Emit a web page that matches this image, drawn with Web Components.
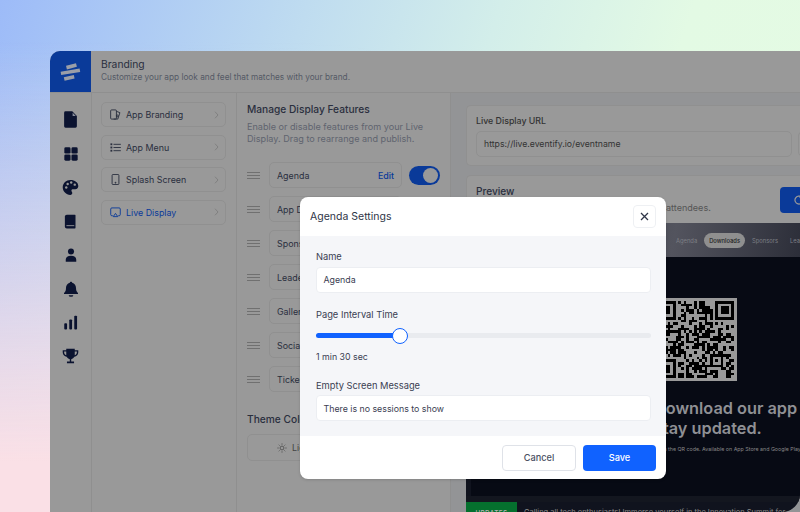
<!DOCTYPE html>
<html><head><meta charset="utf-8"><style>
html,body{margin:0;height:100%}
body{width:800px;height:512px;overflow:hidden;box-sizing:border-box;padding:51px 0 0 50px;
background:linear-gradient(108deg,#9dbbf8 0%,#bfdcf0 32%,#d3eeea 52%,#e3fae4 72%,#e5fbe3 100%);font-family:"Inter","Noto Sans",sans-serif;position:relative}
.bgl{position:absolute;inset:0;background:linear-gradient(to bottom,rgba(250,222,228,0) 8%,rgba(250,224,230,1) 90%);-webkit-mask:linear-gradient(to right,#000 0,#000 60px,transparent 400px);mask:linear-gradient(to right,#000 0,#000 60px,transparent 400px)}
app-window{position:relative}
</style></head><body><div class="bgl"></div>
<app-window>
 <agenda-modal slot="modal"></agenda-modal>
</app-window>
<script>
const I={
doc:'<path d="M5 .5h9.500L21 7v14.500a2 2 0 0 1-2 2H5a2 2 0 0 1-2-2v-19a2 2 0 0 1 2-2z"/><path d="M15 2.500 19.500 7H15z" fill="#8a8f9c"/>',
grid:'<rect x="2" y="2" width="9.300" height="9.300" rx="2"/><rect x="12.700" y="2" width="9.300" height="9.300" rx="2"/><rect x="2" y="12.700" width="9.300" height="9.300" rx="2"/><rect x="12.700" y="12.700" width="9.300" height="9.300" rx="2"/>',
palette:'<path d="M12 1.500C5.900 1.500 1 6 1 11.800c0 5.800 4.900 10.700 10.600 10.700 2 0 2.900-1.200 2.900-2.600 0-1.800-1.200-2.100-1.200-3.500 0-1.200 1-1.900 2.200-1.900h3.200c2.800 0 4.300-1.900 4.300-4.500C23 5 18 1.500 12 1.500z"/><g fill="#999"><circle cx="6" cy="12" r="1.700"/><circle cx="8" cy="7" r="1.700"/><circle cx="13" cy="5" r="1.700"/><circle cx="18" cy="8" r="1.700"/></g>',
book:'<path d="M6 1h13a1 1 0 0 1 1 1v20a1 1 0 0 1-1 1H6a3 3 0 0 1-3-3V4a3 3 0 0 1 3-3z"/><rect x="5.500" y="18" width="12.500" height="1.400" fill="#999"/>',
user:'<circle cx="12" cy="6" r="5.200"/><path d="M3 23.500v-3.500C3 16 6.500 13.500 12 13.500s9 2.500 9 6.500v3.500z"/>',
bell:'<path d="M12 1c1 0 1.800.8 1.800 1.700 3.700.9 5.700 4 5.700 7.800 0 4.500 1.500 6.300 3 7.500v1.500h-21V18c1.500-1.200 3-3 3-7.500 0-3.800 2-6.900 5.700-7.800C10.200 1.800 11 1 12 1z"/><path d="M8.500 21.300h7a3.500 2.500 0 0 1-7 0z"/>',
bars:'<rect x="2" y="13" width="4.500" height="10" rx="1.500"/><rect x="10" y="7" width="4.500" height="16" rx="1.500"/><rect x="18" y="1" width="4.500" height="22" rx="1.500"/>',
trophy:'<path d="M6 1h12v2h5v3c0 3.500-2.500 6-5.500 6.500-1 1.800-2.500 3-4.500 3.300V19h4v2.500H7V19h4v-3.200c-2-.3-3.500-1.500-4.500-3.300C3.500 12 1 9.500 1 6V3h5zM3 5v1c0 2 1 3.500 3 4.200V5zm18 0h-3v5.200c2-.7 3-2.200 3-4.200z"/>'
};
function svg(n,s){return `<svg viewBox="0 0 24 24" width="${s}" height="${s}" fill="currentColor">${I[n]}</svg>`}
class Base extends HTMLElement{
 constructor(){super();this.attachShadow({mode:'open'});this.shadowRoot.innerHTML=this.html()}
}
class NavRail extends Base{html(){const sizes={doc:17,grid:16,palette:17,book:15,user:14,bell:16,bars:15,trophy:17};
 return `<style>:host{display:flex;flex-direction:column;align-items:center;width:41px;flex:none;border-right:1px solid #8f8f8f;color:#0b1330;padding-top:10px;box-sizing:content-box}
 .i{height:33.800px;display:flex;align-items:center;justify-content:center}svg{display:block}</style>`+
 Object.keys(sizes).map(k=>`<div class="i">${svg(k,sizes[k])}</div>`).join('')}}
customElements.define('nav-rail',NavRail);
class MenuItem extends Base{html(){return `<style>:host{display:flex;align-items:center;height:25px;box-sizing:border-box;border:1px solid #909090;border-radius:5px;padding:0 6px 0 8px;gap:5px;font-size:8.900px;color:#2a2f3e}
 :host([active]){color:#0a3a99}
 .ic{width:11px;height:11px;display:flex}.t{flex:1}svg{display:block}
 .c{width:5px;height:8px;color:#808080}</style>
 <span class="ic"><slot name="icon"></slot></span><span class="t"><slot></slot></span><svg class="c" viewBox="0 0 5 8" fill="none" stroke="currentColor" stroke-width="1"><path d="M1 .7 4 4 1 7.300"/></svg>`}}
customElements.define('menu-item',MenuItem);
class FeatureRow extends Base{html(){return `<style>:host{display:flex;align-items:center;height:26px;gap:9px}
 .d{width:13px;height:7px;flex:none;border-top:1px solid #707070;border-bottom:1px solid #707070;position:relative;box-sizing:border-box}
 .d::after{content:"";position:absolute;left:0;right:0;top:2px;height:1px;background:#707070}
 .f{width:133px;height:26px;box-sizing:border-box;border:1px solid #909090;border-radius:5px;padding:0 7px;display:flex;align-items:center;justify-content:space-between;font-size:8.900px;color:#2a2f3e;flex:none}
 ::slotted([slot=edit]){color:#0a3a99;font-weight:500}
 </style><span class="d"></span><span class="f"><span><slot></slot></span><slot name="edit"></slot></span><slot name="toggle"></slot>`}}
customElements.define('feature-row',FeatureRow);
class ToggleSwitch extends Base{html(){return `<style>:host{display:block;width:31px;height:19px;border-radius:10px;background:#0a3a99;position:relative;flex:none;margin-left:-2px}
 i{position:absolute;right:2px;top:2px;width:15px;height:15px;border-radius:50%;background:#999}</style><i></i>`}}
customElements.define('toggle-switch',ToggleSwitch);
class QrCode extends Base{html(){
 const n=29,cells=[];let seed=11;const r=()=>(seed=(seed*73+41)%1009)/1009;
 const fin=(x,y)=>{const a=[];for(let j=0;j<7;j++)for(let i=0;i<7;i++){if(i==0||j==0||i==6||j==6||(i>1&&i<5&&j>1&&j<5))a.push([x+i,y+j])}return a};
 const res=(x,y,X,Y)=>x>=X-1&&x<=X+7&&y>=Y-1&&y<=Y+7;
 const al=(x,y)=>x>=20&&x<=24&&y>=20&&y<=24;
 for(let y=0;y<n;y++)for(let x=0;x<n;x++){if(res(x,y,0,0)||res(x,y,22,0)||res(x,y,0,22)||al(x,y))continue;if(r()>.47)cells.push([x,y])}
 cells.push(...fin(0,0),...fin(22,0),...fin(0,22));
 for(let j=0;j<5;j++)for(let i=0;i<5;i++)if(i==0||j==0||i==4||j==4||(i==2&&j==2))cells.push([20+i,20+j]);
 return `<style>:host{display:block;width:83px;height:83px;background:#999;box-sizing:border-box;padding:3px;flex:none}svg{display:block;width:77px;height:77px}</style>
 <svg viewBox="0 0 ${n} ${n}" shape-rendering="crispEdges" fill="#000">${cells.map(c=>`<rect x="${c[0]}" y="${c[1]}" width="1" height="1"/>`).join('')}</svg>`}}
customElements.define('qr-code',QrCode);
class LivePreview extends Base{html(){return `<style>
 :host{display:flex;flex-direction:column;background:#10131e;height:289px;width:334px;border-radius:0 0 18px 0;overflow:hidden;color:#999;flex:none}
 .nav{height:34px;flex:none;width:334px;background:linear-gradient(100deg,#23262f,#53545e 62%,#2c2e39);display:flex;align-items:center;justify-content:flex-start;gap:7px;font-size:5.800px;color:#7d7f85;padding-left:210px;white-space:nowrap;box-sizing:border-box;overflow:hidden}
 .nav span{flex:none}.nav .on{background:#8f8f8f;color:#222;border-radius:8px;padding:4px 5px;font-weight:500;}
 .nav .l{margin-left:5px}
 .panel{flex:none;height:239px;margin:0 0 0 5px;background:#070a14;display:flex;flex-direction:column;align-items:flex-start;padding:41px 0 0 183px;box-sizing:border-box}
 h3{margin:17px 0 0;font-size:16.300px;line-height:20px;font-weight:600;color:#8f9094;white-space:nowrap}
 p{margin:7px 0 0;font-size:5.300px;line-height:8px;color:#888;white-space:nowrap}
 .strip{height:6px;flex:none;background:#13161f}
 .tk{height:10px;flex:none;display:flex;align-items:flex-start;gap:7px;font-size:7.500px;color:#8a8a8a;white-space:nowrap}
 .tk b{width:51px;height:10px;background:#05702e;font-weight:500;font-size:6.400px;text-align:center;padding-top:7px;box-sizing:border-box;color:#b5b5b5;flex:none;letter-spacing:.4px}
 .tk span{padding-top:6px}
 </style>
 <div class="nav"><span>Agenda</span><span class="on">Downloads</span><span>Sponsors</span><span class="l">Leaderboard</span></div>
 <div class="panel"><qr-code></qr-code><h3>Download our app<br>stay updated.</h3><p>Scan the QR code. Available on App Store and Google Play</p></div>
 <div class="strip"></div>
 <div class="tk"><b>UPDATES</b><span>Calling all tech enthusiasts! Immerse yourself in the Innovation Summit for</span></div>`}}
customElements.define('live-preview',LivePreview);
class AgendaModal extends Base{html(){return `<style>
 :host{display:flex;flex-direction:column;position:absolute;left:250px;top:146px;width:366px;height:282px;background:#fff;border-radius:8px;overflow:hidden;color:#2f3547;box-shadow:0 1px 3px rgba(0,0,0,.15)}
 .h{height:39px;flex:none;display:flex;align-items:center;justify-content:space-between;padding:0 10px 1px;box-sizing:border-box;font-size:10.500px;font-weight:400}
 .x{width:23px;height:23px;box-sizing:border-box;border:1px solid #eef0f3;border-radius:4px;display:flex;align-items:center;justify-content:center;color:#2f3547;margin-top:1px}
 .b{flex:1;background:#f5f6f9;padding:15px 15px 0 16px;display:flex;flex-direction:column}
 label{font-size:9.300px;height:12px;line-height:12px;display:block;color:#3a4052}
 .in{height:26px;box-sizing:border-box;margin-top:3.500px;background:#fff;border:1px solid #eceef2;border-radius:4px;display:flex;align-items:center;padding:0 6.500px;font-size:8.800px;color:#3a4052}
 .sl{height:5px;background:#e9ebef;border-radius:3px;margin-top:12px;position:relative}
 .sl i{position:absolute;left:0;top:0;bottom:0;width:84px;background:#1062ff;border-radius:3px}
 .sl u{position:absolute;left:76px;top:-5.500px;width:16px;height:16px;box-sizing:border-box;border-radius:50%;background:#fff;border:1.500px solid #1062ff}
 .v{font-size:8.800px;margin-top:13px;height:12px;line-height:12px;color:#3a4052}
 .f{height:43px;flex:none;display:flex;justify-content:flex-end;align-items:center;gap:7px;padding:0 10px 0 0;box-sizing:border-box;font-size:9.200px}
 .f span{width:74px;height:26px;box-sizing:border-box;border-radius:4px;display:flex;align-items:center;justify-content:center;font-weight:500}
 .c{border:1px solid #dfe2e8;color:#4a5063}.s{background:#1062ff;color:#fff;width:73px!important}
 </style>
 <div class="h"><span>Agenda Settings</span><span class="x"><svg width="9" height="9" viewBox="0 0 9 9" stroke="currentColor" stroke-width="1.300" fill="none"><path d="M1 1l7 7M8 1 1 8"/></svg></span></div>
 <div class="b">
  <label>Name</label><div class="in">Agenda</div>
  <label style="margin-top:16.500px">Page Interval Time</label><div class="sl"><i></i><u></u></div>
  <div class="v">1 min 30 sec</div>
  <label style="margin-top:17px">Empty Screen Message</label><div class="in" style="margin-top:3px">There is no sessions to show</div>
 </div>
 <div class="f"><span class="c">Cancel</span><span class="s">Save</span></div>`}}
customElements.define('agenda-modal',AgendaModal);
class AppWindow extends Base{html(){return `<style>
 :host{display:block;width:750px;height:461px;background:#999;border-radius:10px 0 0 0;overflow:hidden;color:#2a2f3e;position:relative}
 .top{height:41px;display:flex;border-bottom:1px solid #8f8f8f;box-sizing:content-box}
 .logo{width:41px;height:41px;background:#0a3a99;display:flex;align-items:center;justify-content:center;flex:none;color:#9a9ea8}
 .ti{padding:7px 0 0 10px;font-size:10.300px;line-height:13px}.ti small{display:block;font-size:8.250px;line-height:13px;color:#555a66}
 .main{display:flex;height:419px}
 .c2{border-right:1px solid #8f8f8f;padding:9px 10px 0 9px;box-sizing:border-box;display:flex;flex-direction:column;gap:7.500px;flex:none;width:145px}
 .c3{width:214px;flex:none;padding:10px 0 0 10px;box-sizing:border-box;border-right:1px solid #8f8f8f}
 h2{margin:0;font-size:10.200px;font-weight:500;line-height:13px}
 .d{margin:5px 0 0;font-size:9.100px;line-height:12.200px;color:#60646f}
 .rows{display:flex;flex-direction:column;gap:8px;margin-top:17px}
 .th{margin-top:21px}
 .lt{margin-top:8px;height:27px;width:200px;border:1px solid #909090;border-radius:5px;box-sizing:border-box;display:flex;align-items:center;gap:5px;padding-left:29px;font-size:8.900px;color:#444}
 .c4{flex:1;background:#939496;padding:12px 0 0 15px;min-width:0;overflow:hidden;display:flex;flex-direction:column}
 .card{border:1px solid #909090;border-right:0;border-radius:5px 0 0 5px;padding:9px 0 0 9px;box-sizing:border-box;background:#999}
 .u{height:61px;flex:none;position:relative}.u label{display:block;font-size:8.800px;font-weight:500;line-height:12px;color:#333}
 .u div{margin-top:4px;height:26px;width:316px;box-sizing:border-box;border:1px solid #909090;border-radius:5px;display:flex;align-items:center;padding:0 7px;font-size:8.700px;color:#333}
 .u i{position:absolute;left:331px;top:25px;width:30px;height:26px;box-sizing:border-box;border:1px solid #909090;border-radius:5px}
 .p{margin-top:9px;height:48px;flex:none;position:relative;border-bottom:0;border-radius:5px 0 0 0}
 .p b{font-weight:500;font-size:10.100px;line-height:13px;display:block}
 .p small{display:block;font-size:9.050px;line-height:13px;color:#555;margin-top:3px;white-space:nowrap}
 .r{position:absolute;left:313px;top:11px;width:30px;height:26px;background:#0a3a99;border-radius:4px;color:#999;display:flex;align-items:center;padding-left:13px;box-sizing:border-box}
 </style>
 <div class="top"><div class="logo"><svg width="21" height="18" viewBox="0 0 21 18" fill="currentColor"><path d="M6 2.800 16 .2l.9 3.600-10 2.600zM.6 8.700l19-3.200.6 3.400-19 3.200zM3.800 14.200l10-2.200.8 3.400-10 2.400z"/></svg></div>
  <div class="ti">Branding<small>Customize your app look and feel that matches with your brand.</small></div></div>
 <div class="main"><nav-rail></nav-rail>
  <div class="c2">
   <menu-item><svg slot="icon" viewBox="0 0 12 12" width="11" height="11" fill="none" stroke="currentColor" stroke-width="1"><rect x=".7" y="1" width="6.300" height="10" rx="1"/><path d="M7 2.500l3.800 1.500-2.300 7H4"/><circle cx="8" cy="7.500" r="1"/></svg>App Branding</menu-item>
   <menu-item><svg slot="icon" viewBox="0 0 12 12" width="11" height="11" fill="currentColor"><rect x=".5" y="1.500" width="2" height="2"/><rect x=".5" y="5" width="2" height="2"/><rect x=".5" y="8.500" width="2" height="2"/><rect x="3.800" y="2" width="8" height="1"/><rect x="3.800" y="5.500" width="8" height="1"/><rect x="3.800" y="9" width="8" height="1"/></svg>App Menu</menu-item>
   <menu-item><svg slot="icon" viewBox="0 0 12 12" width="11" height="11" fill="none" stroke="currentColor" stroke-width="1"><rect x="2.300" y=".5" width="7.400" height="11" rx="1"/><circle cx="6" cy="9.500" r=".5" fill="currentColor"/></svg>Splash Screen</menu-item>
   <menu-item active><svg slot="icon" viewBox="0 0 12 12" width="11" height="11" fill="none" stroke="currentColor" stroke-width="1"><path d="M3 9.500H2a1.200 1.200 0 0 1-1.200-1.200V2.200A1.200 1.200 0 0 1 2 1h8a1.200 1.200 0 0 1 1.200 1.200v6.100A1.200 1.200 0 0 1 10 9.500H9"/><path d="M6 7l2.500 3.500h-5z"/></svg>Live Display</menu-item>
  </div>
  <div class="c3">
   <h2>Manage Display Features</h2>
   <p class="d">Enable or disable features from your Live<br>Display. Drag to rearrange and publish.</p>
   <div class="rows">
    <feature-row>Agenda<span slot="edit">Edit</span><toggle-switch slot="toggle"></toggle-switch></feature-row>
    <feature-row>App Display</feature-row><feature-row>Sponsors</feature-row><feature-row>Leaderboard</feature-row><feature-row>Gallery</feature-row><feature-row>Social Wall</feature-row><feature-row>Ticker</feature-row>
   </div>
   <h2 class="th">Theme Color</h2>
   <div class="lt"><svg width="10" height="10" viewBox="0 0 12 12" fill="none" stroke="currentColor" stroke-width=".9"><circle cx="6" cy="6" r="2.300"/><path d="M6 .5v1.500M6 10v1.500M.5 6H2M10 6h1.500M2.100 2.100l1 1M8.900 8.900l1 1M2.100 9.900l1-1M8.900 3.100l1-1"/></svg>Light</div>
  </div>
  <div class="c4">
   <div class="card u"><label>Live Display URL</label><div>https://live.eventify.io/eventname</div><i></i></div>
   <div class="card p"><b>Preview</b><small>Preview how your live display looks for your attendees.</small><span class="r"><svg width="12" height="12" viewBox="0 0 12 12" fill="none" stroke="currentColor" stroke-width="1.200"><path d="M10 6a4 4 0 1 1-1.200-2.800M9 .8v2.500H6.500"/></svg></span></div>
   <live-preview></live-preview>
  </div>
 </div>
 <slot name="modal"></slot>`}}
customElements.define('app-window',AppWindow);
</script></body></html>
